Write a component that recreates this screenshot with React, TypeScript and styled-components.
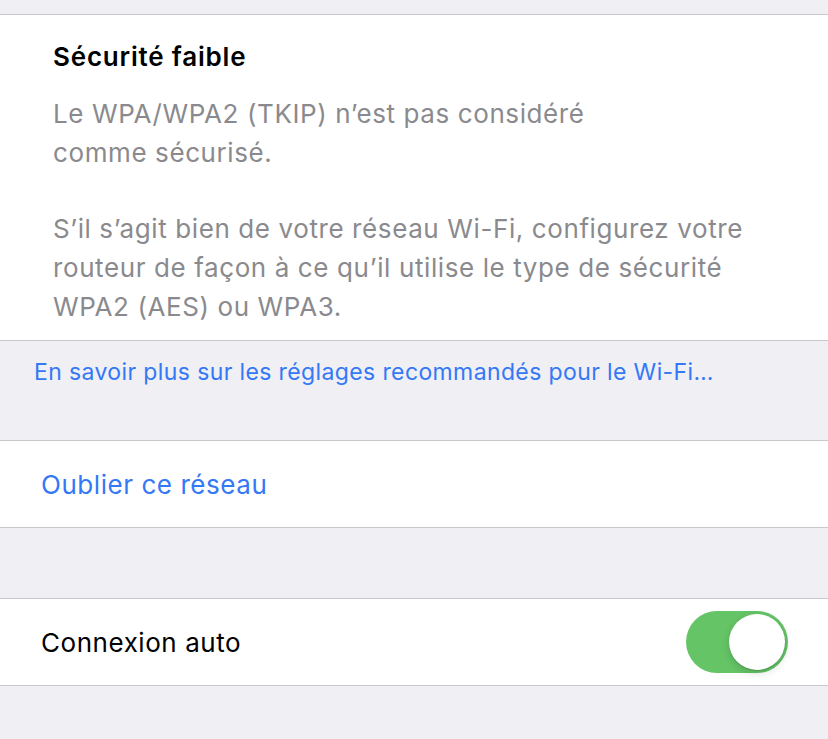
import React from "react";
import styled, { createGlobalStyle } from "styled-components";

const Global = createGlobalStyle`
  html, body { margin: 0; padding: 0; background: #efeff4; }
  body { font-family: Inter, "Noto Sans", sans-serif; -webkit-font-smoothing: antialiased; }
`;

const Page = styled.div`
  width: 828px;
  height: 739px;
  background: #efeff4;
  display: flex;
  flex-direction: column;
  overflow: hidden;
`;

const Spacer = styled.div<{ $h: number }>`
  height: ${(p) => p.$h}px;
  flex: none;
`;

const Group = styled.div`
  background: #ffffff;
  border-top: 1px solid #c8c7cc;
  border-bottom: 1px solid #c8c7cc;
  flex: none;
`;

const InfoBlock = styled.div`
  padding: 26px 20px 20px 53px;
  height: 279px;
  box-sizing: content-box;
`;

const Title = styled.div`
  font-size: 26px;
  font-weight: 600;
  color: #000;
  line-height: 32px;
  letter-spacing: 0.8px;
  margin-bottom: 21px;
`;

const Desc = styled.p`
  margin: 0 0 37px;
  font-size: 26px;
  line-height: 39px;
  color: #8a8a8e;
  white-space: nowrap;
  letter-spacing: 0.6px;
`;

const Footer = styled.div`
  padding: 15px 34px 0;
  height: 84px;
  font-size: 23px;
  line-height: 32px;
  color: #3478f6;
  letter-spacing: 0.38px;
  white-space: nowrap;
`;

const Row = styled.div`
  height: 86px;
  display: flex;
  align-items: center;
  justify-content: space-between;
  padding: 0 40px 0 41px;
`;

const RowLabel = styled.span<{ $blue?: boolean }>`
  font-size: 26px;
  color: ${(p) => (p.$blue ? "#3478f6" : "#000")};
  letter-spacing: 0.55px;
`;

const Toggle = styled.div`
  width: 102px;
  height: 62px;
  border-radius: 31px;
  background: #65c466;
  position: relative;
  flex: none;
`;

const Knob = styled.div`
  position: absolute;
  top: 3px;
  right: 3px;
  width: 56px;
  height: 56px;
  border-radius: 50%;
  background: #fff;
  box-shadow: 0 3px 8px rgba(0, 0, 0, 0.15), 0 1px 1px rgba(0, 0, 0, 0.16);
`;

export default function App() {
  return (
    <Page>
      <Global />
      <Spacer $h={14} />
      <Group>
        <InfoBlock>
          <Title>Sécurité faible</Title>
          <Desc>
            Le WPA/WPA2 (TKIP) n’est pas considéré
            <br />
            comme sécurisé.
          </Desc>
          <Desc>
            S’il s’agit bien de votre réseau Wi-Fi, configurez votre
            <br />
            routeur de façon à ce qu’il utilise le type de sécurité
            <br />
            WPA2 (AES) ou WPA3.
          </Desc>
        </InfoBlock>
      </Group>
      <Footer>En savoir plus sur les réglages recommandés pour le Wi-Fi…</Footer>
      <Group>
        <Row>
          <RowLabel $blue>Oublier ce réseau</RowLabel>
        </Row>
      </Group>
      <Spacer $h={70} />
      <Group>
        <Row>
          <RowLabel>Connexion auto</RowLabel>
          <Toggle>
            <Knob />
          </Toggle>
        </Row>
      </Group>
    </Page>
  );
}
